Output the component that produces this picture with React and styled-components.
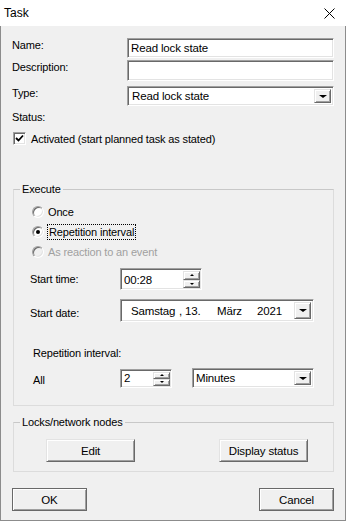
import styled, { createGlobalStyle, css } from "styled-components";

const GlobalStyle = createGlobalStyle`
  html, body {
    margin: 0;
    padding: 0;
    background: #fff;
  }
  * {
    box-sizing: border-box;
  }
`;

const Window = styled.div`
  width: 346px;
  height: 521px;
  display: flex;
  flex-direction: column;
  font-family: "Liberation Sans", Arial, sans-serif;
  font-size: 11px;
  letter-spacing: -0.15px;
  color: #000;
`;

const TitleBar = styled.div`
  height: 26px;
  background: #fff;
  display: flex;
  align-items: center;
  justify-content: space-between;
  padding: 0 11px 0 4px;
  font-size: 12px;
  letter-spacing: 0;
`;

const Body = styled.div`
  flex: 1;
  background: #f0f0f0;
  border: 1px solid #8c8c8c;
  border-top: none;
  padding: 12px 11px 0 11px;
  display: flex;
  flex-direction: column;
`;

const FieldGrid = styled.div`
  display: grid;
  grid-template-columns: 115px 1fr;
  grid-template-rows: 20px 21px 23px;
  row-gap: 2px;
  & > :nth-child(n + 5) {
    margin-top: 3px;
  }
`;

const Label = styled.div`
  line-height: 14px;
  white-space: nowrap;
  color: ${(p) => (p.$disabled ? "#a0a0a0" : "#000")};
`;

const sunken = css`
  background: #fff;
  border-top: 1px solid #a0a0a0;
  border-left: 1px solid #a0a0a0;
  border-bottom: 1px solid #fff;
  border-right: 1px solid #fff;
  box-shadow: inset 1px 1px 0 #696969, inset -1px -1px 0 #e3e3e3;
`;

const raised = css`
  background: #f0f0f0;
  border-top: 1px solid #e3e3e3;
  border-left: 1px solid #e3e3e3;
  border-bottom: 1px solid #696969;
  border-right: 1px solid #696969;
  box-shadow: inset 1px 1px 0 #fff, inset -1px -1px 0 #a0a0a0;
`;

const TextBox = styled.div`
  ${sunken};
  height: 100%;
  width: 100%;
  display: flex;
  align-items: center;
  padding-left: 3px;
  font-size: 11.5px;
  white-space: nowrap;
`;

const Combo = styled.div`
  ${sunken};
  height: ${(p) => p.$height || 20}px;
  width: ${(p) => p.$width || "100%"};
  display: flex;
  align-items: center;
  padding: 2px 2px 2px ${(p) => p.$pad ?? 4}px;
  font-size: 11.5px;
  white-space: nowrap;
`;

const ComboText = styled.div`
  flex: 1;
  display: flex;
  align-items: center;
  height: 100%;
`;

const DropButton = styled.div`
  ${raised};
  width: 17px;
  height: 100%;
  display: flex;
  align-items: center;
  justify-content: center;
`;

const Arrow = styled.div`
  width: 0;
  height: 0;
  border-left: ${(p) => p.$size || 4}px solid transparent;
  border-right: ${(p) => p.$size || 4}px solid transparent;
  ${(p) =>
    p.$up
      ? `border-bottom: ${Math.ceil((p.$size || 4) / 1.5)}px solid #000;`
      : `border-top: ${Math.ceil((p.$size || 4) / 1.5)}px solid #000;`}
`;

const SpinBox = styled.div`
  ${sunken};
  width: ${(p) => p.$width}px;
  height: ${(p) => p.$height}px;
  display: flex;
  align-items: stretch;
  padding: 2px 1px 1px 2px;
  font-size: 11.5px;
`;

const SpinValue = styled.div`
  flex: 1;
  display: flex;
  align-items: ${(p) => (p.$top ? "flex-start" : "center")};
  padding-left: 1px;
`;

const SpinButtons = styled.div`
  width: 17px;
  display: flex;
  flex-direction: column;
`;

const SpinButton = styled.div`
  ${raised};
  flex: 1;
  display: flex;
  align-items: center;
  justify-content: center;
`;

const StatusLabel = styled(Label)`
  margin-top: 4px;
`;

const CheckRow = styled.div`
  display: flex;
  align-items: center;
  gap: 5px;
  height: 13px;
  margin-top: 8px;
  padding-left: 1px;
`;

const CheckBox = styled.div`
  width: 13px;
  height: 13px;
  ${sunken};
  display: flex;
  align-items: center;
  justify-content: center;
`;

const Group = styled.div`
  position: relative;
  margin: ${(p) => p.$top}px 0 0 1px;
  width: 321px;
  height: ${(p) => p.$height}px;
  border: 1px solid #dcdcdc;
  border-top-color: #c8c8c8;
  display: flex;
  flex-direction: column;
`;

const Caption = styled.span`
  position: absolute;
  top: -8px;
  left: 6px;
  padding: 0 2px;
  background: #f0f0f0;
  line-height: 14px;
`;

const RadioList = styled.div`
  display: flex;
  flex-direction: column;
  margin: 12px 0 0 18px;
`;

const RadioRow = styled.div`
  display: flex;
  align-items: center;
  gap: 4px;
  height: 20px;
  color: ${(p) => (p.$disabled ? "#a0a0a0" : "#000")};
`;

const Radio = styled.div`
  width: 12px;
  height: 12px;
  border-radius: 50%;
  background: ${(p) => (p.$disabled ? "#f0f0f0" : "#fff")};
  border: 1px solid #a0a0a0;
  border-right-color: #fff;
  border-bottom-color: #fff;
  box-shadow: inset 1px 1px 0 #696969, inset -1px -1px 0 #e3e3e3;
  display: flex;
  align-items: center;
  justify-content: center;
  &::after {
    content: "";
    width: 4px;
    height: 4px;
    border-radius: 50%;
    background: #000;
    display: ${(p) => (p.$checked ? "block" : "none")};
  }
`;

const Focused = styled.span`
  outline: 1px dotted #000;
  padding: 1px;
`;

const FormRow = styled.div`
  display: grid;
  grid-template-columns: ${(p) => p.$label || 90}px auto 1fr;
  align-items: center;
  height: ${(p) => p.$height}px;
  margin-top: ${(p) => p.$top}px;
  padding-left: ${(p) => p.$indent || 16}px;
`;

const SubHeading = styled(Label)`
  margin: 24px 0 0 19px;
`;

const ButtonRow = styled.div`
  display: flex;
  justify-content: space-between;
  margin-top: ${(p) => p.$top}px;
  padding: ${(p) => p.$pad || "0"};
`;

const Button = styled.div`
  width: ${(p) => p.$width}px;
  height: 23px;
  display: flex;
  align-items: center;
  justify-content: center;
  font-size: 11.5px;
  ${raised};
  ${(p) =>
    p.$default &&
    css`
      border: 1px solid #696969;
      box-shadow: inset 1px 1px 0 #fff, inset -1px -1px 0 #a0a0a0,
        inset 2px 2px 0 #f0f0f0, inset -2px -2px 0 #f0f0f0;
    `}
`;

const DateParts = styled.div`
  display: grid;
  grid-template-columns: 48px 38px 40px auto;
`;

const CloseIcon = () => (
  <svg width="11" height="11" viewBox="0 0 11 11">
    <path d="M0.5 0.5 L10.5 10.5 M10.5 0.5 L0.5 10.5" stroke="#000" strokeWidth="1" />
  </svg>
);

const CheckMark = () => (
  <svg width="9" height="9" viewBox="0 0 9 9">
    <path d="M1 4 L3.5 6.5 L8 1.5" stroke="#000" strokeWidth="1.8" fill="none" />
  </svg>
);

const Spinner = ({ value, width, height, top }) => (
  <SpinBox $width={width} $height={height}>
    <SpinValue $top={top}>{value}</SpinValue>
    <SpinButtons>
      <SpinButton>
        <Arrow $up $size={2} />
      </SpinButton>
      <SpinButton>
        <Arrow $size={2} />
      </SpinButton>
    </SpinButtons>
  </SpinBox>
);

const App = () => {
  return (
    <>
      <GlobalStyle />
      <Window>
        <TitleBar>
          <span>Task</span>
          <CloseIcon />
        </TitleBar>
        <Body>
          <FieldGrid>
            <Label>Name:</Label>
            <TextBox>Read lock state</TextBox>
            <Label>Description:</Label>
            <TextBox />
            <Label>Type:</Label>
            <Combo>
              <ComboText>Read lock state</ComboText>
              <DropButton>
                <Arrow $size={4} />
              </DropButton>
            </Combo>
          </FieldGrid>
          <StatusLabel>Status:</StatusLabel>
          <CheckRow>
            <CheckBox>
              <CheckMark />
            </CheckBox>
            <span>Activated (start planned task as stated)</span>
          </CheckRow>

          <Group $top={44} $height={217}>
            <Caption>Execute</Caption>
            <RadioList>
              <RadioRow>
                <Radio />
                <span>Once</span>
              </RadioRow>
              <RadioRow>
                <Radio $checked />
                <Focused>Repetition interval</Focused>
              </RadioRow>
              <RadioRow $disabled>
                <Radio $disabled />
                <span>As reaction to an event</span>
              </RadioRow>
            </RadioList>
            <FormRow $height={22} $top={6}>
              <Label>Start time:</Label>
              <Spinner value="00:28" width={82} height={22} />
            </FormRow>
            <FormRow $height={23} $top={9}>
              <Label style={{ paddingTop: 4 }}>Start date:</Label>
              <Combo $width="194px" $height={23} $pad={10}>
                <ComboText>
                  <DateParts>
                    <span>Samstag</span>
                    <span>, 13.</span>
                    <span>März</span>
                    <span>2021</span>
                  </DateParts>
                </ComboText>
                <DropButton>
                  <Arrow $size={4} />
                </DropButton>
              </Combo>
            </FormRow>
            <SubHeading>Repetition interval:</SubHeading>
            <FormRow $height={20} $top={8} $indent={19} $label={87}>
              <Label style={{ paddingTop: 3 }}>All</Label>
              <Spinner value="2" width={52} height={19} top />
              <Combo $width="122px" $pad={3} style={{ marginLeft: 20 }}>
                <ComboText>Minutes</ComboText>
                <DropButton>
                  <Arrow $size={4} />
                </DropButton>
              </Combo>
            </FormRow>
          </Group>

          <Group $top={16} $height={50}>
            <Caption>Locks/network nodes</Caption>
            <ButtonRow $top={16} $pad="0 25px 0 32px">
              <Button $width={89}>Edit</Button>
              <Button $width={89}>Display status</Button>
            </ButtonRow>
          </Group>

          <ButtonRow $top={16}>
            <Button $width={75} $default>
              OK
            </Button>
            <Button $width={75} $default>
              Cancel
            </Button>
          </ButtonRow>
        </Body>
      </Window>
    </>
  );
};

export default App;
